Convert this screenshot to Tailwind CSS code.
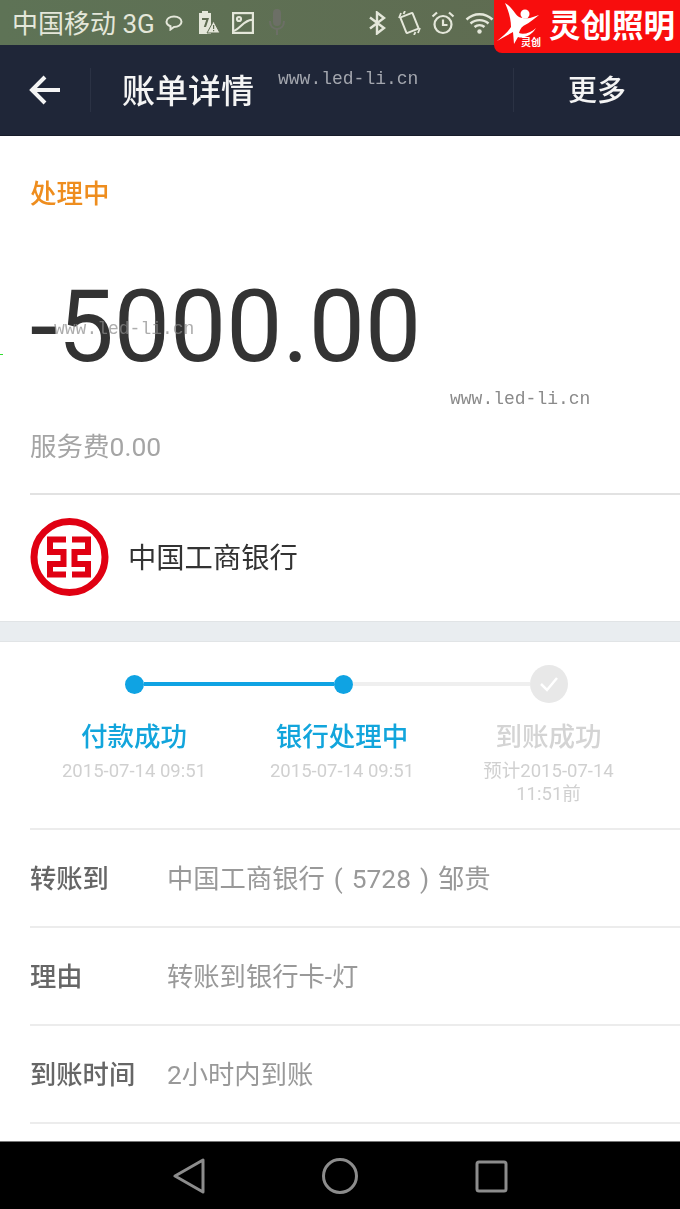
<!DOCTYPE html>
<html lang="zh-CN">
<head>
    <meta charset="UTF-8">
    <meta name="viewport" content="width=device-width, initial-scale=1.0">
    <title>账单详情</title>
    <script src="https://cdn.jsdelivr.net/npm/@tailwindcss/browser@4"></script>
</head>
<body class="bg-white">
    <div class="relative w-[680px] h-[1209px] overflow-hidden flex flex-col blur-[0.4px] font-['Roboto','Noto_Sans_CJK_SC',sans-serif]">

        <!-- Status bar -->
        <div class="h-[45px] shrink-0 flex items-center pl-[12px] bg-gradient-to-r from-[#5e7356] to-[#5f6a50] text-[#e4e7da]">
            <span class="text-[26px] leading-[45px] pt-[3px] w-[150px] whitespace-nowrap">中国移动 3G</span>
            <svg class="ml-[3px] w-[18px] h-[16px]" viewBox="0 0 18 16" fill="none" stroke="currentColor" stroke-width="2"><path d="M9 1.500c4.300 0 7.500 2.300 7.500 5.300S13.300 12 9 12l-3.500 2.500V11.300C3 10.300 1.500 8.800 1.500 6.800 1.500 3.800 4.700 1.500 9 1.500z"/></svg>
            <svg class="ml-[15px] w-[22px] h-[23px]" viewBox="0 0 22 23" fill="currentColor"><path d="M4 0h6v2h3v21H1V2h3z"/><path d="M4 7h7l-3 9H5.800l2.400-7H4z" fill="#5f6d52"/><path d="M15.500 10 22 22H9z" stroke="#5f6d52" stroke-width="1"/><path d="M15 14h1.200v4H15zM15 19h1.200v1.300H15z" fill="#5f6d52"/></svg>
            <svg class="ml-[12px] w-[22px] h-[22px]" viewBox="0 0 22 22" fill="none" stroke="currentColor" stroke-width="2.200"><rect x="1.100" y="1.100" width="19.800" height="19.800"/><circle cx="7" cy="7" r="2"/><path d="M1.500 19C8 17 13 7 20.500 8"/></svg>
            <svg class="ml-[14px] w-[18px] h-[27px] text-[#6c6f66]" viewBox="0 0 18 27" fill="currentColor"><rect x="5" y="0" width="8" height="17" rx="4"/><path d="M2 12c0 5 3 8 7 8s7-3 7-8" fill="none" stroke="currentColor" stroke-width="2"/><rect x="8" y="20" width="2" height="6"/></svg>
            <svg class="ml-[82px] w-[19px] h-[24px]" viewBox="0 0 19 24" fill="none" stroke="currentColor" stroke-width="2.400"><path d="M2 6.500 16 17l-7 5.500V1.500L16 7 2 17.500"/></svg>
            <svg class="ml-[11px] w-[23px] h-[24px]" viewBox="0 0 23 24" fill="none" stroke="currentColor" stroke-width="2"><rect x="5" y="3.500" width="13" height="17" rx="1" transform="rotate(-22 11.500 12)"/><path d="M3 2 1 7M7 0 5.500 3M20 22l2-5M16 24l1.500-3" stroke-width="1.800"/></svg>
            <svg class="ml-[10px] w-[24px] h-[24px]" viewBox="0 0 24 24" fill="none" stroke="currentColor" stroke-width="2.200"><circle cx="12" cy="13.500" r="8.500"/><path d="M12 8.500v5.500h4.500M1.500 5.500 6 1.500M22.500 5.500 18 1.500"/></svg>
            <svg class="ml-[10px] w-[29px] h-[22px]" viewBox="0 0 29 22" fill="none" stroke="currentColor" stroke-width="2.400"><path d="M1.500 7.500C9 .5 20 .5 27.500 7.500M5.500 11.500c5-4.500 13-4.500 18 0M9.500 15c3-2.500 7-2.500 10 0"/><circle cx="14.500" cy="19.500" r="2.200" fill="currentColor" stroke="none"/></svg>
        </div>

        <!-- Nav bar -->
        <div class="h-[91px] shrink-0 flex items-center bg-[#1f2638] text-[#f4f4f4] border-b border-[#171c2a]">
            <div class="w-[91px] h-[44px] flex items-center justify-center border-r border-[#2b3244]">
                <svg class="w-[32px] h-[30px]" viewBox="0 0 32 30" fill="none" stroke="currentColor" stroke-width="4"><path d="M31 15H4M16 2 3 15l13 13"/></svg>
            </div>
            <div class="flex-1 pl-[31px] pt-[2px] text-[33px] leading-none font-medium">账单详情</div>
            <div class="w-[167px] h-[44px] flex items-center justify-center border-l border-[#2b3244] text-[29px] font-medium pt-[4px]">更多</div>
        </div>

        <!-- Amount -->
        <div class="shrink-0 ml-[30px] pt-[40px] pb-[28px] border-b-2 border-[#e2e2e2]">
            <div class="text-[26.500px] leading-[36px] font-medium text-[#ee8d1e]">处理中</div>
            <div class="mt-[65px] text-[100px] leading-[100px] text-[#333333] whitespace-nowrap">-5000.00</div>
            <div class="mt-[52px] text-[26.500px] leading-[36px] text-[#a5a5a5]">服务费0.00</div>
        </div>

        <!-- Bank -->
        <div class="h-[126px] shrink-0 px-[25px] flex items-center gap-[12px]">
            <svg class="w-[88px] h-[88px]" viewBox="0 0 88 88" fill="none" stroke="#e00012">
                <circle cx="44.500" cy="43" r="35.500" stroke-width="7"/>
                <path d="M41 25.500H25V38H38.500V50H25V60.500H41" stroke-width="6"/>
                <path d="M47 25.500H63V38H49.500V50H63V60.500H47" stroke-width="6"/>
            </svg>
            <span class="text-[28.300px] text-[#333333] ml-[3px] pt-[3px]">中国工商银行</span>
        </div>
        <div class="h-[21px] shrink-0 bg-[#e9edf0] border-y border-[#e1e4e6]"></div>

        <!-- Progress -->
        <div class="shrink-0 ml-[30px] h-[188px] pt-[23px] border-b-2 border-[#ececec]">
            <div class="flex items-center pl-[95px]">
                <span class="w-[19px] h-[19px] rounded-full bg-[#0fa3e3]"></span>
                <span class="w-[190px] h-[4px] bg-[#0fa3e3]"></span>
                <span class="w-[19px] h-[19px] rounded-full bg-[#0fa3e3]"></span>
                <span class="w-[177px] h-[4px] bg-[#efefef]"></span>
                <span class="w-[38px] h-[38px] rounded-full bg-[#e8e8e8] flex items-center justify-center">
                    <svg class="w-[20px] h-[16px]" viewBox="0 0 20 16" fill="none" stroke="#ffffff" stroke-width="2.500"><path d="M2 8l6 6L18 2"/></svg>
                </span>
            </div>
            <div class="grid grid-cols-[208px_208px_205px] mt-[16px] text-center">
                <div>
                    <div class="text-[26.500px] leading-[36px] font-medium text-[#12a5dc]">付款成功</div>
                    <div class="mt-[5px] text-[18.500px] leading-[22px] text-[#d0d0d0]">2015-07-14 09:51</div>
                </div>
                <div>
                    <div class="text-[26.500px] leading-[36px] font-medium text-[#12a5dc]">银行处理中</div>
                    <div class="mt-[5px] text-[18.500px] leading-[22px] text-[#d0d0d0]">2015-07-14 09:51</div>
                </div>
                <div>
                    <div class="text-[26.500px] leading-[36px] font-medium text-[#d4d4d4]">到账成功</div>
                    <div class="mt-[5px] text-[18.500px] leading-[23px] text-[#d0d0d0]">预计2015-07-14<br>11:51前</div>
                </div>
            </div>
        </div>

        <!-- Detail rows -->
        <div class="flex-1 min-h-0 ml-[30px] text-[26.300px]">
            <div class="h-[98px] pt-[4px] flex items-center border-b-2 border-[#ececec]">
                <span class="w-[137px] font-medium text-[#666666]">转账到</span>
                <span class="text-[#999999]">中国工商银行<span class="mx-[9px]">(</span>5728<span class="mx-[9px]">)</span>邹贵</span>
            </div>
            <div class="h-[98px] pt-[4px] flex items-center border-b-2 border-[#ececec]">
                <span class="w-[137px] font-medium text-[#666666]">理由</span>
                <span class="text-[#999999]">转账到银行卡-灯</span>
            </div>
            <div class="h-[98px] pt-[4px] flex items-center border-b-2 border-[#ececec]">
                <span class="w-[137px] font-medium text-[#666666]">到账时间</span>
                <span class="text-[#999999]">2小时内到账</span>
            </div>
        </div>

        <!-- Android nav -->
        <div class="h-[68px] shrink-0 bg-black border-t border-[#777777] flex items-center justify-center gap-[117px] pt-[1px]">
            <svg class="w-[32px] h-[36px]" viewBox="0 0 32 36" fill="none" stroke="#8c8c8c" stroke-width="3" stroke-linejoin="round"><path d="M30 2v32L2 18z"/></svg>
            <svg class="w-[36px] h-[36px]" viewBox="0 0 36 36" fill="none" stroke="#8c8c8c" stroke-width="3"><circle cx="18" cy="18" r="16.500"/></svg>
            <svg class="w-[33px] h-[33px]" viewBox="0 0 33 33" fill="none" stroke="#8c8c8c" stroke-width="3"><rect x="2" y="2" width="29" height="29" rx="2"/></svg>
        </div>

        <!-- Watermark logo and stamped urls -->
        <div class="absolute left-[494px] top-0 w-[186px] h-[53px] bg-[#f80d0d] rounded-bl-[8px] text-white flex items-center">
            <svg class="absolute left-0 top-0 w-[52px] h-[53px]" viewBox="0 0 52 53" fill="#ffffff">
                <path d="M11 3C15 5 18 9 21 13C24 18 30 19 36 18L45 15C40 19 35 23 31 25C27 27 26 30 25 33C29 35 37 33 42 28C38 35 30 39 24 37L20 44L19 32L3 41C9 36 14 32 17 27C17 18 14 10 11 3z"/>
                <circle cx="31" cy="14" r="4.500"/>
            </svg>
            <span class="absolute left-[27px] top-[37px] text-[10px] leading-[12px] font-bold whitespace-nowrap">灵创</span>
            <span class="ml-[55px] text-[31.500px] leading-none font-bold whitespace-nowrap">灵创照明</span>
        </div>
        <span class="absolute left-[278px] top-[67px] font-['Liberation_Mono',monospace] text-[18px] leading-[24px] text-[#a3a6ae]">www.led-li.cn</span>
        <span class="absolute left-[54px] top-[317px] font-['Liberation_Mono',monospace] text-[18px] leading-[24px] text-[#8a8a8a]/70">www.led-li.cn</span>
        <span class="absolute left-[450px] top-[387px] font-['Liberation_Mono',monospace] text-[18px] leading-[24px] text-[#8a8a8a]">www.led-li.cn</span>
        <span class="absolute left-0 top-[354px] w-[3px] h-px bg-[#33dd33]"></span>
    </div>
</body>
</html>
